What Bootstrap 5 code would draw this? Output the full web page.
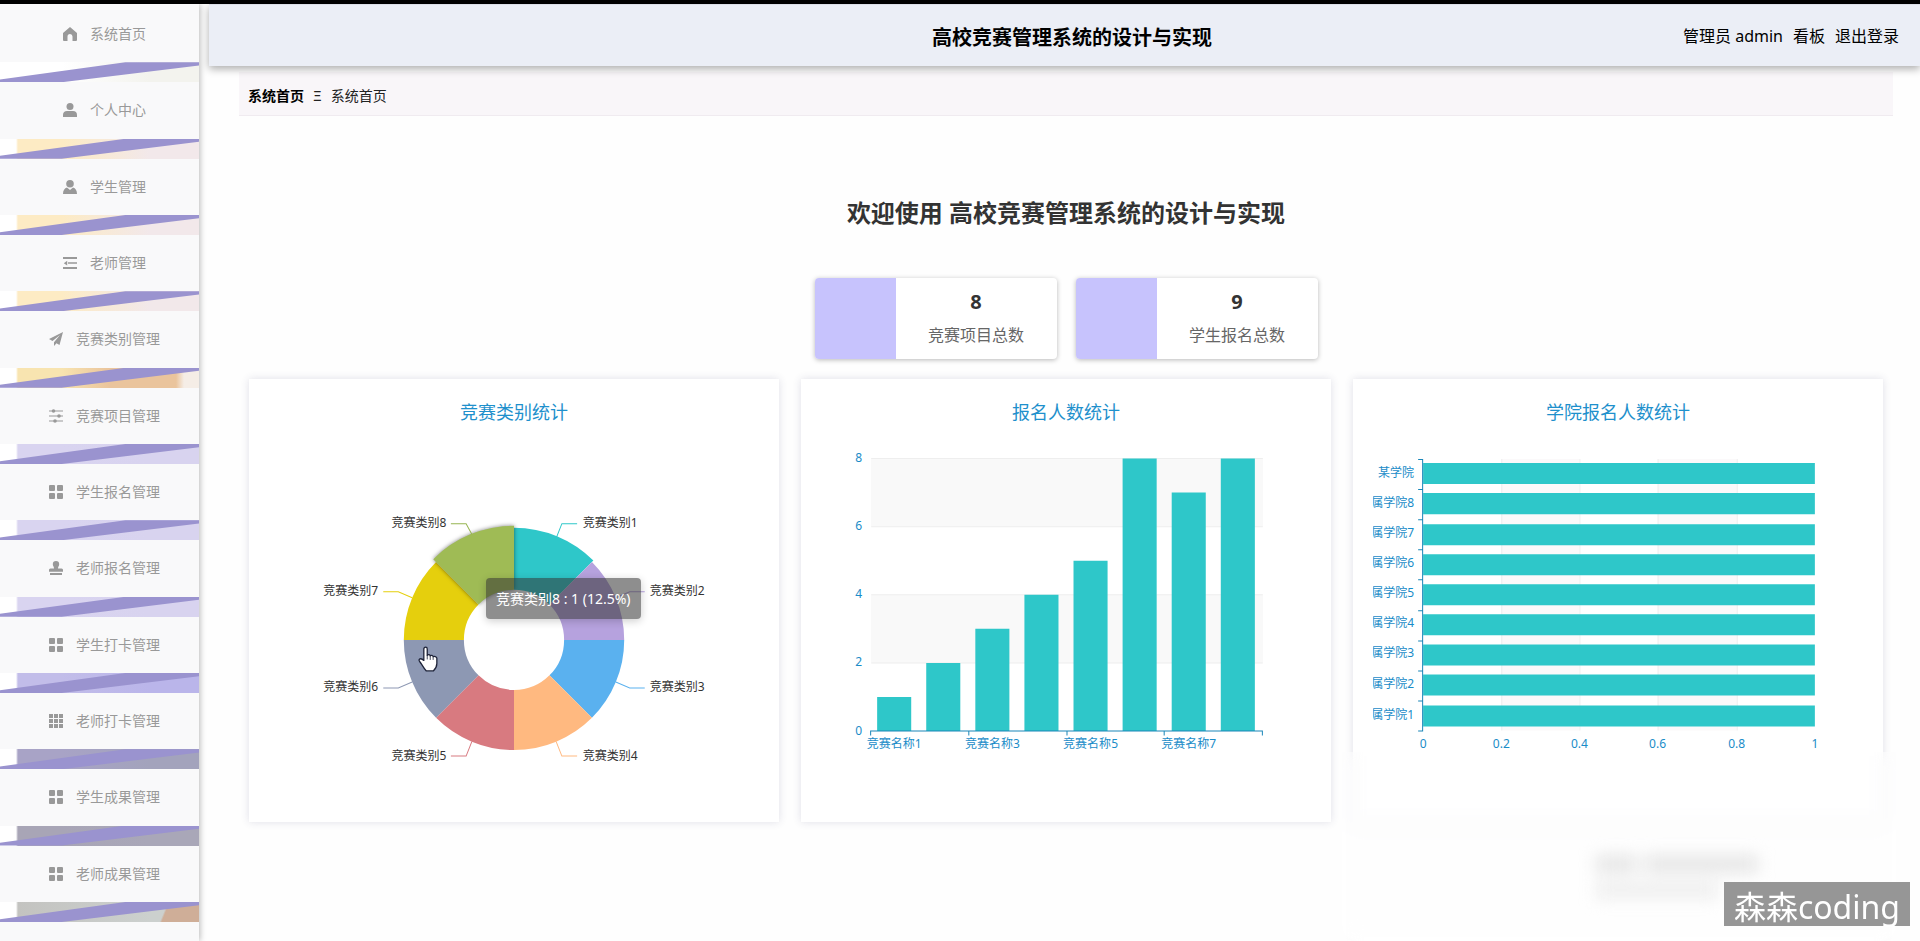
<!DOCTYPE html>
<html lang="zh-CN">
<head>
<meta charset="utf-8">
<meta name="viewport" content="width=device-width, initial-scale=1">
<title>高校竞赛管理系统的设计与实现</title>
<link href="https://cdn.jsdelivr.net/npm/bootstrap@5.3.0/dist/css/bootstrap.min.css" rel="stylesheet">
<style>
  body { font-family: "Noto Sans", "Noto Sans CJK SC", sans-serif; background: #fefefe; color: #333; }
  a { text-decoration: none; color: inherit; }
  .shell { border-top: 4px solid #000; }

  /* sidebar */
  .side { width: 199px; background: #f9f9fa; box-shadow: 1px 0 6px rgba(0,0,0,.28); padding: 2px 0 19px; }
  .side ul { flex: 1 1 auto; }
  .side li { flex: 1 1 0; min-height: 60px; }
  .side li a { font-size: 14px; line-height: 20px; color: #999; gap: 13px; padding-left: 10px; }
  .side li a svg { width: 14px; height: 14px; fill: #999; stroke: none; }
  .stripe { height: 20px; position: relative; background: linear-gradient(90deg, #fff 0 16px, var(--near) 18px 62px, var(--far) 75%); }
  .stripe::before { content: ""; position: absolute; inset: 0; background: #9a93cf; clip-path: polygon(0 86%, 63% 0, 100% 0, 100% 16%, 31% 100%, 0 100%); }
  .s-plain { --near: #fff; --far: #f3f3ee; }
  .s-cream { --near: #fdebc4; --far: #f2e8ea; }
  .s-amber { background: linear-gradient(90deg, #fff 0 16px, #f8e4b0 18px 62px, #eac49c 110px 176px, #f5ede6 184px); }
  .s-lilac { --near: #d9d4f0; --far: #d8d3ef; }
  .s-violet { --near: #c2bde9; --far: #bab5ea; }
  .s-slate { --near: #a8a3c6; --far: #a3a3bc; }
  .s-grey { --near: #a8a5b6; --far: #a9a7b8; }
  .s-tan { background: linear-gradient(112deg, transparent 81%, #cfae98 82%), linear-gradient(90deg, #fff 0 16px, #c3c3c0 18px, #ccd0ce 150px); }

  /* header */
  .topbar { margin-left: 10px; height: 62px; padding: 0 21px 0 36px; background: #ebeef6; border-top: 1px solid #dcdfe8; box-shadow: 0 3px 8px rgba(0,0,0,.32); color: #000; display: grid; grid-template-columns: 1fr auto 1fr; position: relative; z-index: 1; }
  .topbar h1 { font-size: 20px; line-height: 28px; font-weight: 700; }
  .topbar nav { font-size: 16px; line-height: 24px; gap: 10px; }

  .main-pane { padding: 0 27px 0 40px; }
  .crumbs { margin-top: 6px; height: 44px; padding: 4px 9px 0; background: #f9f6f9; border-bottom: 1px solid #f0ebf0; font-size: 14px; line-height: 20px; gap: 9px; color: #222; }
  .crumbs b { color: #000; }
  .welcome { margin-top: 79px; font-size: 24px; line-height: 36px; font-weight: 700; }

  /* totals */
  .totals { margin-top: 47px; gap: 19px; }
  .total { width: 242px; height: 81px; border-radius: 4px; background: #fff; overflow: hidden; box-shadow: 0 1px 5px rgba(0,0,0,.28); }
  .total-mark { width: 81px; background: #c7c3fd; }
  .total-text { padding-bottom: 3px; }
  .total strong { font-size: 20px; line-height: 30px; }
  .total span { font-size: 16px; line-height: 24px; color: #666; margin-top: 6px; }

  /* charts */
  .charts { margin-top: 20px; padding: 0 10px; display: grid; grid-template-columns: repeat(3, 1fr); gap: 22px; }
  .panel { background: #fff; box-shadow: 0 0 8px rgba(60,60,110,.16); min-width: 0; }
  .panel h2 { font-size: 18px; line-height: 28px; font-weight: 400; color: #1e90cc; text-align: center; padding-top: 19px; height: 60px; margin: 0; }
  .plot { position: relative; }
  .plot svg { display: block; width: 100%; height: auto; }
  .plot text { font-size: 12px; }
  .axis-text { fill: #1a8cc8; }
  .axis-line { stroke: #1a86b8; fill: none; }
  .tip { position: absolute; left: 237px; top: 139px; padding: 10px; border-radius: 4px; background: rgba(50,50,50,.55); color: #fff; font-size: 14px; line-height: 21px; box-shadow: 0 2px 8px rgba(0,0,0,.2); white-space: nowrap; }

  /* frosted corner and watermark */
  .frost { position: absolute; right: 24px; bottom: 0; width: 554px; height: 189px; backdrop-filter: blur(9px); background: rgba(254,254,254,.3); z-index: 2; }
  .smudge { position: absolute; right: 162px; bottom: 42px; width: 162px; filter: blur(8px); z-index: 3; }
  .smudge i { height: 18px; background: #e6e6e6; }
  .smudge .faint { background: #efefef; }
  .signature { position: absolute; right: 10px; bottom: 15px; z-index: 4; height: 44px; padding: 0 10px; background: #969696; color: #fff; font-size: 32px; line-height: 50px; }
</style>
</head>
<body>
<svg width="0" height="0" class="position-absolute" aria-hidden="true">
  <symbol id="i-grid" viewBox="0 0 14 14"><rect width="6" height="6" rx="1"/><rect x="8" width="6" height="6" rx="1"/><rect y="8" width="6" height="6" rx="1"/><rect x="8" y="8" width="6" height="6" rx="1"/></symbol>
  <symbol id="i-home" viewBox="0 0 14 14"><path d="M7 0 14 6v7a1 1 0 0 1-1 1H9.500V9.500a2.500 2.500 0 0 0-5 0V14H1a1 1 0 0 1-1-1V6z"/></symbol>
  <symbol id="i-user" viewBox="0 0 14 14"><circle cx="7" cy="3.500" r="3.500"/><path d="M0 14v-2c0-2.500 1.500-4 4-4h6c2.500 0 4 1.500 4 4v2z"/></symbol>
  <symbol id="i-tie" viewBox="0 0 14 14"><circle cx="7" cy="3.800" r="3.800"/><path d="M0 14c0-3.500 1.500-5.800 4-6.500L7 10l3-2.500c2.500.7 4 3 4 6.500z"/></symbol>
  <symbol id="i-fold" viewBox="0 0 14 14"><path d="M0 1h14v2H0zM5 6.200h9v1.600H5zM0 11h14v2H0zM4.200 4.800v4.800L.8 7.200z"/></symbol>
  <symbol id="i-send" viewBox="0 0 14 14"><path d="M14 0 0 7l3.500 2L11 3 5 10.200V14l2.500-2.700 3 1.700z"/></symbol>
  <symbol id="i-sliders" viewBox="0 0 14 14"><path d="M0 1.500h14v1H0zM0 6.500h14v1H0zM0 11.500h14v1H0z"/><circle cx="4.500" cy="2" r="1.800"/><circle cx="10" cy="7" r="1.800"/><circle cx="6" cy="12" r="1.800"/></symbol>
  <symbol id="i-stamp" viewBox="0 0 14 14"><path d="M7 0a3.200 3.200 0 0 1 3.200 3.200C10.200 5 9 5.500 9 7.500h3.500c1 0 1.500.8 1.500 1.500v1.800H0V9c0-.7.500-1.500 1.500-1.500H5c0-2-1.200-2.500-1.200-4.300A3.200 3.200 0 0 1 7 0zM1 12h12v2H1z"/></symbol>
  <symbol id="i-nine" viewBox="0 0 14 14"><path d="M0 0h4v4H0zM5 0h4v4H5zM10 0h4v4h-4zM0 5h4v4H0zM5 5h4v4H5zM10 5h4v4h-4zM0 10h4v4H0zM5 10h4v4H5zM10 10h4v4h-4z"/></symbol>
</svg>

<div class="shell d-flex min-vh-100 position-relative overflow-hidden">
  <aside class="side d-flex flex-column flex-shrink-0">
    <ul class="list-unstyled d-flex flex-column m-0">
      <li class="d-flex flex-column"><a href="#" class="d-flex flex-fill align-items-center justify-content-center"><svg><use href="#i-home"/></svg>系统首页</a><div class="stripe s-plain"></div></li>
      <li class="d-flex flex-column"><a href="#" class="d-flex flex-fill align-items-center justify-content-center"><svg><use href="#i-user"/></svg>个人中心</a><div class="stripe s-cream"></div></li>
      <li class="d-flex flex-column"><a href="#" class="d-flex flex-fill align-items-center justify-content-center"><svg><use href="#i-tie"/></svg>学生管理</a><div class="stripe s-cream"></div></li>
      <li class="d-flex flex-column"><a href="#" class="d-flex flex-fill align-items-center justify-content-center"><svg><use href="#i-fold"/></svg>老师管理</a><div class="stripe s-cream"></div></li>
      <li class="d-flex flex-column"><a href="#" class="d-flex flex-fill align-items-center justify-content-center"><svg><use href="#i-send"/></svg>竞赛类别管理</a><div class="stripe s-amber"></div></li>
      <li class="d-flex flex-column"><a href="#" class="d-flex flex-fill align-items-center justify-content-center"><svg><use href="#i-sliders"/></svg>竞赛项目管理</a><div class="stripe s-lilac"></div></li>
      <li class="d-flex flex-column"><a href="#" class="d-flex flex-fill align-items-center justify-content-center"><svg><use href="#i-grid"/></svg>学生报名管理</a><div class="stripe s-lilac"></div></li>
      <li class="d-flex flex-column"><a href="#" class="d-flex flex-fill align-items-center justify-content-center"><svg><use href="#i-stamp"/></svg>老师报名管理</a><div class="stripe s-lilac"></div></li>
      <li class="d-flex flex-column"><a href="#" class="d-flex flex-fill align-items-center justify-content-center"><svg><use href="#i-grid"/></svg>学生打卡管理</a><div class="stripe s-violet"></div></li>
      <li class="d-flex flex-column"><a href="#" class="d-flex flex-fill align-items-center justify-content-center"><svg><use href="#i-nine"/></svg>老师打卡管理</a><div class="stripe s-slate"></div></li>
      <li class="d-flex flex-column"><a href="#" class="d-flex flex-fill align-items-center justify-content-center"><svg><use href="#i-grid"/></svg>学生成果管理</a><div class="stripe s-grey"></div></li>
      <li class="d-flex flex-column"><a href="#" class="d-flex flex-fill align-items-center justify-content-center"><svg><use href="#i-grid"/></svg>老师成果管理</a><div class="stripe s-tan"></div></li>
    </ul>
  </aside>

  <div class="flex-fill">
    <header class="topbar align-items-center">
      <span></span>
      <h1 class="m-0 pt-1">高校竞赛管理系统的设计与实现</h1>
      <nav class="d-flex justify-content-end"><span>管理员 admin</span><a href="#">看板</a><a href="#">退出登录</a></nav>
    </header>

    <main class="main-pane">
      <div class="crumbs d-flex align-items-center"><b>系统首页</b><span>Ξ</span><span>系统首页</span></div>
      <h2 class="welcome text-center mb-0">欢迎使用 高校竞赛管理系统的设计与实现</h2>

      <div class="totals d-flex justify-content-center">
        <div class="total d-flex"><div class="total-mark"></div><div class="total-text flex-fill d-flex flex-column align-items-center justify-content-center"><strong>8</strong><span>竞赛项目总数</span></div></div>
        <div class="total d-flex"><div class="total-mark"></div><div class="total-text flex-fill d-flex flex-column align-items-center justify-content-center"><strong>9</strong><span>学生报名总数</span></div></div>
      </div>

      <div class="charts">
        <section class="panel">
          <h2>竞赛类别统计</h2>
          <div class="plot">
            <svg viewBox="0 60 529 382" role="img" aria-label="竞赛类别统计">
              <path fill="#2ec7c9" d="M264.5 148.500A112 112 0 0 1 343.700 181.300L299.9 225.1A50 50 0 0 0 264.5 210.5Z"/>
              <path fill="#b6a2de" d="M342.3 182.7A110 110 0 0 1 374.5 260.5H314.5A50 50 0 0 0 299.9 225.1Z"/>
              <path fill="#5ab1ef" d="M374.5 260.5A110 110 0 0 1 342.3 338.3L299.9 295.9A50 50 0 0 0 314.5 260.5Z"/>
              <path fill="#ffb980" d="M342.3 338.3A110 110 0 0 1 264.5 370.5V310.5A50 50 0 0 0 299.9 295.9Z"/>
              <path fill="#d87a80" d="M264.5 370.5A110 110 0 0 1 186.7 338.3L229.1 295.9A50 50 0 0 0 264.5 310.5Z"/>
              <path fill="#8d98b3" d="M186.7 338.3A110 110 0 0 1 154.5 260.5H214.5A50 50 0 0 0 229.1 295.9Z"/>
              <path fill="#e5cf0d" d="M154.5 260.5A110 110 0 0 1 186.7 182.7L229.1 225.1A50 50 0 0 0 214.5 260.5Z"/>
              <path fill="#9fbb55" style="filter:drop-shadow(0 0 2px rgba(0,0,0,.5))" d="M183.9 179.9A114 114 0 0 1 264.5 146.500V210.5A50 50 0 0 0 229.1 225.1Z"/>
              <g fill="none">
                <path stroke="#2ec7c9" d="M306.6 158.900 312.300 144.500H327.500"/>
                <path stroke="#b6a2de" d="M366.100 218.400 380 212.500H395"/>
                <path stroke="#5ab1ef" d="M366.100 302.600 380 308.500H395"/>
                <path stroke="#ffb980" d="M306.600 362.100 312.300 376.500H327.500"/>
                <path stroke="#d87a80" d="M222.400 362.100 216.700 376.500H201.500"/>
                <path stroke="#8d98b3" d="M162.900 302.600 149 308.500H134"/>
                <path stroke="#e5cf0d" d="M162.900 218.400 149 212.500H134"/>
                <path stroke="#97b552" d="M222.400 155 216.700 144.500H201.500"/>
              </g>
              <g fill="#333">
                <text x="333" y="148">竞赛类别1</text><text x="400" y="216">竞赛类别2</text><text x="400" y="312">竞赛类别3</text><text x="333" y="380">竞赛类别4</text>
                <g text-anchor="end"><text x="197" y="380">竞赛类别5</text><text x="129" y="312">竞赛类别6</text><text x="129" y="216">竞赛类别7</text><text x="197" y="148">竞赛类别8</text></g>
              </g>
              <path fill="#fff" stroke="#1d2238" stroke-width="1.300" stroke-linejoin="round" d="M174.500 281V269.500a1.700 1.700 0 0 1 3.400 0V276c.8-1.300 2.800-1 3 .5.9-1 2.700-.6 2.900.8 1-.8 3.700-.2 3.700 1.500V284c0 4-2 6-3.500 7.500h-7c-2-2-3.500-4.500-5-7-1-1.700-2.500-3-2.300-4 .4-1.500 2.600-1.700 4.800.5z"/>
              <path stroke="#1d2238" stroke-width=".8" d="M177.900 276v4M180.900 276.500v4M183.800 277.500v3"/>
            </svg>
            <div class="tip">竞赛类别8 : 1 (12.5%)</div>
          </div>
        </section>

        <section class="panel">
          <h2>报名人数统计</h2>
          <div class="plot">
            <svg viewBox="0 60 529 382" role="img" aria-label="报名人数统计">
              <path fill="#f9f9f9" d="M70 79.500h391v68H70zM70 215.500h391v68H70z"/>
              <path stroke="#eee" d="M70 79.500h391M70 147.500h391M70 215.500h391M70 283.500h391"/>
              <path fill="#2ec7c9" d="M76 317.500h34v34H76zM125 283.500h34v68h-34zM174 249.500h34v102h-34zM223 215.500h34v136h-34zM272 181.500h34v170h-34zM321 79.500h34v272h-34zM370 113.500h34v238h-34zM419 79.500h34v272h-34z"/>
              <path class="axis-line" d="M69 351.500h392M69.500 351v5M167.500 351v5M265.500 351v5M362.500 351v5M460.500 351v5"/>
              <g class="axis-text" text-anchor="end"><text x="61" y="83">8</text><text x="61" y="151">6</text><text x="61" y="219">4</text><text x="61" y="287">2</text><text x="61" y="355">0</text></g>
              <g class="axis-text" text-anchor="middle"><text x="93" y="368">竞赛名称1</text><text x="191" y="368">竞赛名称3</text><text x="289" y="368">竞赛名称5</text><text x="387" y="368">竞赛名称7</text></g>
            </svg>
          </div>
        </section>

        <section class="panel">
          <h2>学院报名人数统计</h2>
          <div class="plot">
            <svg viewBox="0 60 529 382" role="img" aria-label="学院报名人数统计">
              <clipPath id="axis-clip"><rect x="20" y="60" width="509" height="382"/></clipPath>
              <path fill="#fbf9fa" d="M148 80h78v271h-78zM304 80h79v271h-79z"/>
              <path stroke="#eee" d="M148.500 80v271M226.500 80v271M304.500 80v271M383.500 80v271"/>
              <path fill="#2ec7c9" d="M70 84h391v21H70zM70 114h391v21H70zM70 145h391v21H70zM70 175h391v21H70zM70 205h391v21H70zM70 235h391v21H70zM70 265h391v21H70zM70 295h391v21H70zM70 326h391v21H70z"/>
              <path class="axis-line" d="M69.500 80v272M65 80.500h5M65 110.500h5M65 140.500h5M65 170.500h5M65 200.500h5M65 231.500h5M65 261.500h5M65 291.500h5M65 321.500h5M65 351.500h5"/>
              <g class="axis-text" text-anchor="end" clip-path="url(#axis-clip)"><text x="61" y="98">某学院</text><text x="61" y="128">所属学院8</text><text x="61" y="158">所属学院7</text><text x="61" y="188">所属学院6</text><text x="61" y="218">所属学院5</text><text x="61" y="248">所属学院4</text><text x="61" y="278">所属学院3</text><text x="61" y="309">所属学院2</text><text x="61" y="339">所属学院1</text></g>
              <g class="axis-text" text-anchor="middle"><text x="70" y="368">0</text><text x="148" y="368">0.2</text><text x="226" y="368">0.4</text><text x="304" y="368">0.6</text><text x="383" y="368">0.8</text><text x="461" y="368">1</text></g>
            </svg>
          </div>
        </section>
      </div>
    </main>
  </div>

  <div class="frost"></div>
  <div class="smudge d-flex flex-wrap gap-2"><i class="w-25"></i><i class="flex-fill"></i><i class="w-75 faint"></i></div>
  <div class="signature">森森coding</div>
</div>
<script src="https://cdn.jsdelivr.net/npm/bootstrap@5.3.0/dist/js/bootstrap.bundle.min.js"></script>
</body>
</html>
